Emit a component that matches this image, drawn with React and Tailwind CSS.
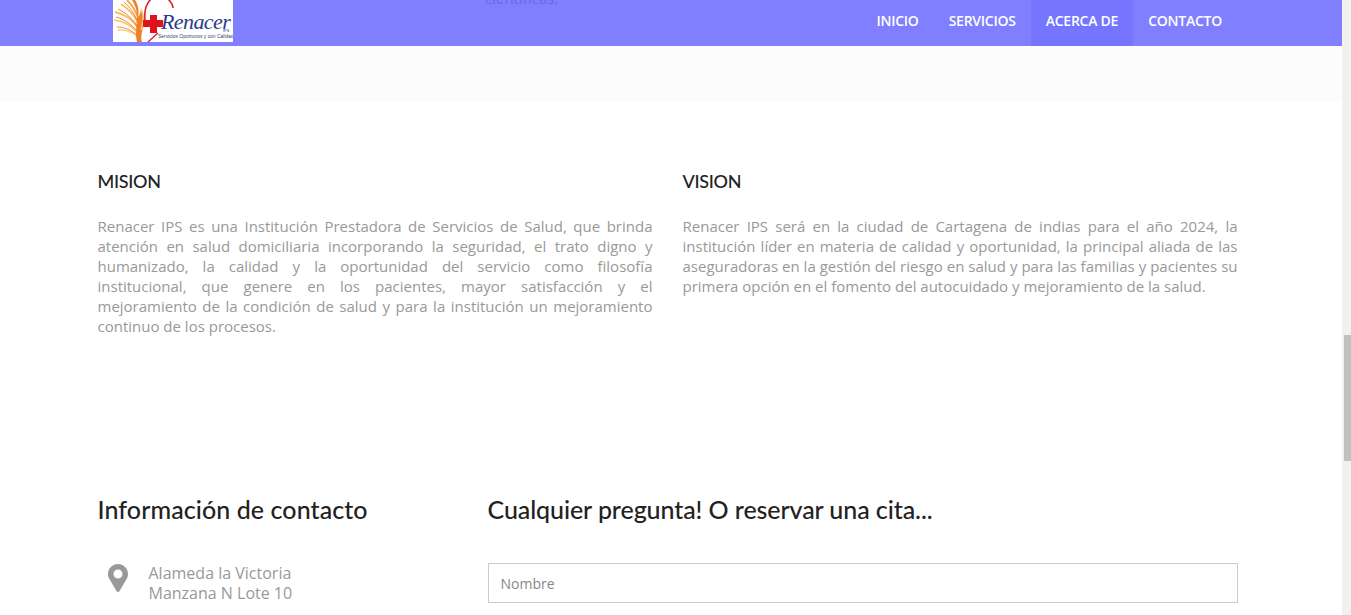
import React from 'react';

const navItems = ['INICIO', 'SERVICIOS', 'ACERCA DE', 'CONTACTO'];

const Logo = () => (
  <div className="relative w-[120px] h-[42px] bg-white overflow-hidden">
    <svg className="absolute left-0 top-0" width="120" height="42" viewBox="0 0 120 42" fill="none">
      {/* wing feathers */}
      <path d="M25 37 C20 32 12 29 5 30" stroke="#f9d77e" strokeWidth="1.8" />
      <path d="M25 33 C19 26 10 21 1 20" stroke="#f9cf6c" strokeWidth="1.8" />
      <path d="M25 28 C20 20 11 14 2 12" stroke="#f7bf55" strokeWidth="1.8" />
      <path d="M25 23 C21 15 16 9 8 4" stroke="#f7c04f" strokeWidth="1.8" />
      <path d="M25 18 C23 11 19 5 14 0" stroke="#f4a93a" strokeWidth="1.8" />
      <path d="M24 35 C18 30 11 27 4 27 M24 31 C18 24 11 19 3 17 M24 26 C19 18 13 13 5 9 M24 20 C21 13 17 7 11 2" stroke="#ec6a28" strokeWidth="0.8" />
      {/* body */}
      <path d="M22 0 C26 6 26 12 25 18 C27 14 28 11 28 8 C32 14 31 24 29 32 C28 36 28 39 29 42 L24 42 C22 34 24 24 24 16 C24 10 22 5 19 0 Z" fill="#ef7f2b" />
      <path d="M28 9 C31 15 30 24 28 30" stroke="#f9d77e" strokeWidth="1.2" />
      {/* ring and cross */}
      <path d="M32 20 C31 11 33 4 38 -1 M55 -1 C58 2 60 5 60 8" stroke="#d8232a" strokeWidth="1.6" />
      <path d="M35 42 L45 33" stroke="#d8232a" strokeWidth="1.4" />
      <path d="M37 15 H44 V20 H50 V27 H44 V33 H37 V27 H30 V20 H37 Z" fill="#e0121c" />
    </svg>
    <span className="absolute left-[48px] top-[12px] font-['Liberation_Serif',serif] italic text-[22px] leading-[20px] text-[#2b3a8c] tracking-[-0.6px]">Renacer</span>
    <span className="absolute left-[110px] top-[28px] font-['Liberation_Sans',sans-serif] text-[4px] leading-[5px] text-[#2b3a8c]">IPS</span>
    <span className="absolute left-[45px] top-[33px] whitespace-nowrap font-['Liberation_Sans',sans-serif] text-[5px] leading-[6px] text-[#444466] tracking-[-0.03px]">Servicios Oportunos y con Calidad</span>
  </div>
);

const PinIcon = () => (
  <svg width="20" height="28" viewBox="0 0 20 28" className="shrink-0">
    <path fillRule="evenodd" d="M10 0 C4.5 0 0 4.4 0 9.9 C0 12 .7 13.7 1.6 15.3 L8.4 26.9 C9.1 28.1 10.9 28.1 11.6 26.9 L18.4 15.3 C19.3 13.7 20 12 20 9.9 C20 4.4 15.5 0 10 0 Z M10 5.5 A4.5 4.5 0 1 1 10 14.5 A4.5 4.5 0 1 1 10 5.5 Z" fill="#999999" />
  </svg>
);

const InfoColumn = ({ title, text }) => (
  <div className="w-[555px]">
    <h3 className="font-['Lato',sans-serif] font-medium text-[18px] tracking-[-0.3px] leading-[24px] text-[#222222] pt-[67px]">{title}</h3>
    <p className="mt-[23px] font-['Open_Sans',sans-serif] text-[15px] leading-[20px] text-[#999999] text-justify">{text}</p>
  </div>
);

export default function App() {
  return (
    <div className="flex w-[1351px] h-[615px] overflow-hidden bg-white">
      <div className="w-[1342px] h-full overflow-hidden">
        {/* Navbar */}
        <header className="relative flex justify-between h-[46px] bg-[#7f7fff] pl-[113px] pr-[105px]">
          <div className="flex items-end pb-[4px]">
            <Logo />
          </div>
          <span className="absolute left-[485px] top-[-12px] font-['Open_Sans',sans-serif] text-[15px] leading-[20px] text-[#6a6ae0]">científicas.</span>
          <nav className="flex font-['Open_Sans',sans-serif] font-semibold text-[14px] tracking-[-0.25px] text-white">
            {navItems.map((item) => (
              <a key={item} className={`flex items-center h-full px-[15px] pb-[5px] ${item === 'ACERCA DE' ? 'bg-[#7575ff]' : ''}`}>
                {item}
              </a>
            ))}
          </nav>
        </header>

        <div className="h-[56px] bg-[#fcfcfc]"></div>

        {/* Mision / Vision */}
        <section className="flex gap-[30px] pl-[97.5px]">
          <InfoColumn
            title="MISION"
            text="Renacer IPS es una Institución Prestadora de Servicios de Salud, que brinda atención en salud domiciliaria incorporando la seguridad, el trato digno y humanizado, la calidad y la oportunidad del servicio como filosofía institucional, que genere en los pacientes, mayor satisfacción y el mejoramiento de la condición de salud y para la institución un mejoramiento continuo de los procesos."
          />
          <InfoColumn
            title="VISION"
            text="Renacer IPS será en la ciudad de Cartagena de indias para el año 2024, la institución líder en materia de calidad y oportunidad, la principal aliada de las aseguradoras en la gestión del riesgo en salud y para las familias y pacientes su primera opción en el fomento del autocuidado y mejoramiento de la salud."
          />
        </section>

        {/* Contacto */}
        <section className="flex pl-[97.5px] mt-[158px]">
          <div className="w-[390px]">
            <h2 className="font-['Lato',sans-serif] font-medium text-[25px] tracking-[0.08px] leading-[30px] text-[#222222]">Información de contacto</h2>
            <div className="flex gap-[20.5px] mt-[39px] pl-[10.5px]">
              <div className="pt-[1px]"><PinIcon /></div>
              <p className="font-['Open_Sans',sans-serif] text-[16px] leading-[20px] text-[#999999]">
                Alameda la Victoria<br />Manzana N Lote 10
              </p>
            </div>
          </div>
          <div className="w-[750px]">
            <h2 className="font-['Lato',sans-serif] font-medium text-[25px] tracking-[-0.08px] leading-[30px] text-[#222222]">Cualquier pregunta! O reservar una cita...</h2>
            <input
              placeholder="Nombre"
              className="block w-full h-[40px] mt-[39px] px-[12px] border border-[#cccccc] font-['Open_Sans',sans-serif] text-[14px] placeholder:text-[#888888] outline-none"
            />
          </div>
        </section>
      </div>

      {/* Scrollbar */}
      <div className="relative w-[9px] h-full bg-[#f1f1f1]">
        <div className="absolute left-[2px] right-0 top-[335px] h-[126px] bg-[#c1c1c1]"></div>
      </div>
    </div>
  );
}
